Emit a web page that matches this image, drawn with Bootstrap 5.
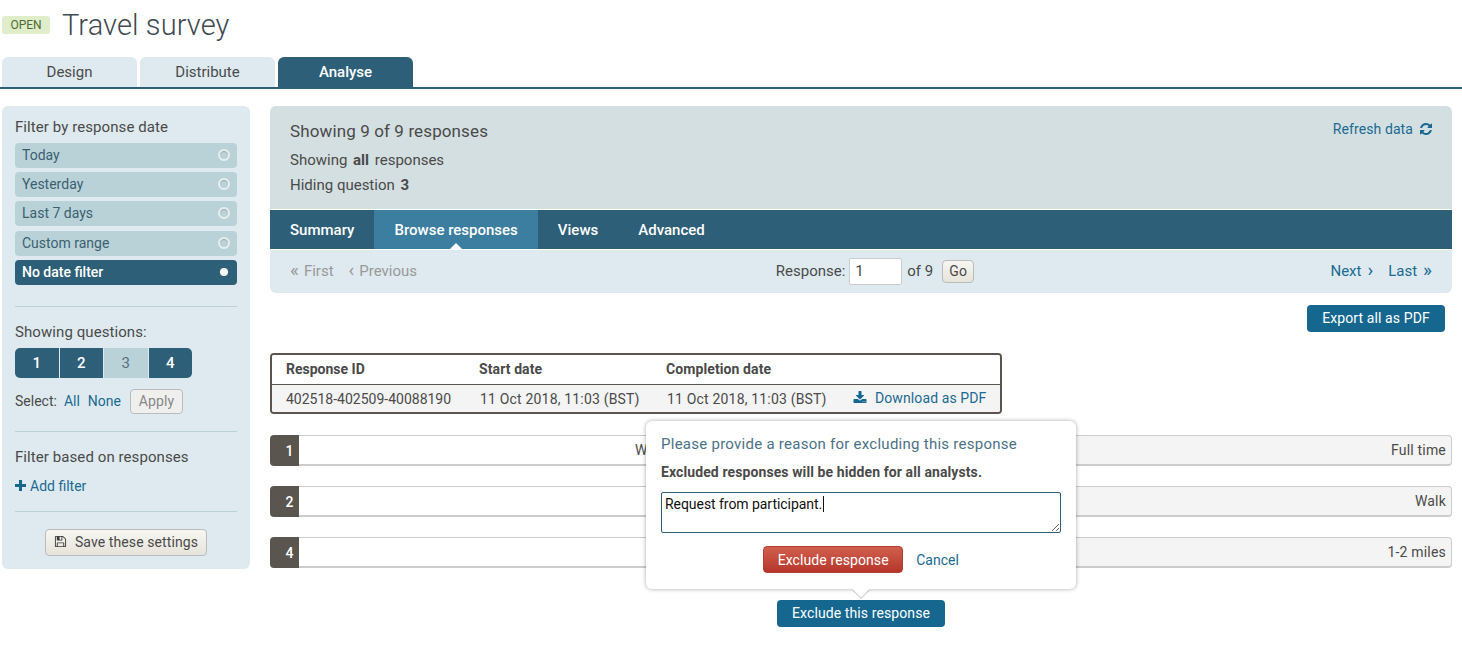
<!DOCTYPE html>
<html lang="en">
<head>
<meta charset="utf-8">
<title>Travel survey</title>
<link rel="stylesheet" href="https://cdn.jsdelivr.net/npm/bootstrap@5.3.0/dist/css/bootstrap.min.css">
<style>
body{font-family:Roboto,"Liberation Sans",sans-serif;font-size:15px;line-height:20px;color:#4a4a4a;background:#fff;overflow:hidden}
a{color:#1a6a91;text-decoration:none}
.page-wrap{padding:0 10px 0 2px}
.head-row{height:57px;display:flex;align-items:center;padding-bottom:7px}
.state-tag{background:#dfedcb;color:#4e6b34;font-size:12px;line-height:18px;height:18px;width:48px;text-align:center;border-radius:3px;margin-right:12px}
.survey-title{font-size:29px;font-weight:300;line-height:36px;margin:0;color:#3f4a52;letter-spacing:.1px}
.main-tabs{margin:0 -10px 0 -2px;padding-left:2px;border-bottom:2px solid #2d6078;height:32px;gap:3px}
.main-tabs a{display:block;width:135px;height:30px;line-height:30px;text-align:center;background:#deeaef;color:#4a4a4a;border-radius:6px 6px 0 0}
.main-tabs a.active{background:#2d6078;color:#fff;font-weight:500}
.layout{display:flex;gap:20px;margin-top:17px;align-items:flex-start}
.side-panel{width:248px;flex:none;height:463px;background:#deeaef;border-radius:6px;padding:11px 13px 0}
.main-col{flex:1;min-width:0}
.side-h{line-height:20px;margin-bottom:6px;letter-spacing:.08px}
.date-opt{display:flex;justify-content:space-between;align-items:center;height:25px;margin-bottom:4.2px;padding:0 7px 1px;border-radius:4px;background:#b9d2d8;color:#3c5f70;font-size:14px}
.date-opt.active{background:#2d6078;color:#fff;font-weight:500}
.radio-ring{width:12px;height:12px;border-radius:50%;border:2px solid #e8eeee;background:#b9d2d8;box-shadow:inset 0 1px 1px rgba(0,0,0,.2)}
.radio-dot{width:8px;height:8px;border-radius:50%;background:#fff;margin-right:2px}
.side-rule{border:0;border-top:1px solid #b9d2d8;opacity:1;margin:0}
.rule-a{margin-top:21px}
.rule-b{margin-top:17px}
.rule-c{margin-top:15px}
.side-h.gap-a{margin-top:15px}
.side-h.gap-b{margin-top:15px;margin-bottom:9px}
.q-btns{display:flex;gap:1px;width:177px;height:30px}
.q-btns span{flex:1;display:flex;align-items:center;justify-content:center;background:#2d6078;color:#fff;font-weight:500}
.q-btns span.off{background:#b9d2d8;color:#55717e;font-weight:400}
.q-btns span:first-child{border-radius:5px 0 0 5px}
.q-btns span:last-child{border-radius:0 5px 5px 0}
.sel-row{display:flex;align-items:center;height:25px;margin-top:11px;font-size:14px}
.sel-row a{margin-left:7px}
.sel-row a+a{margin-left:8px}
.add-link{font-size:14px}
.plain-btn{font-size:14px;line-height:20px;letter-spacing:.1px;border:1px solid #bbb;border-radius:4px;background:linear-gradient(#f7f6f2,#e6e3da);color:#4a4a4a;padding:2px 9px}
.plain-btn:disabled{background:#efefee;color:#888;opacity:1;border-color:#bbb}
.apply-btn{margin-left:9px;height:25px;width:53px;padding:0}
.save-wrap{display:flex;justify-content:center;margin-top:17px}
.save-btn{width:162px;height:27px;display:flex;align-items:center;justify-content:center;gap:8px;padding:0 0 1px}
.sum-head{background:#d4dfe1;height:103px;border-radius:6px 6px 0 0;padding:15px 19px 15px 20px;display:flex;justify-content:space-between}
.sum-title{font-size:17px;line-height:20px;margin-bottom:9px;letter-spacing:.12px}
.sum-line{line-height:20px;margin-bottom:5px}
.sum-line b{font-weight:700;margin:0 2px}
.refresh-link{display:flex;align-items:flex-start;gap:6px;height:16px;font-size:14px;letter-spacing:.1px;margin-top:-2px}
.refresh-link svg{margin-top:3px}
.sub-nav{background:#2d6078;height:39px;margin-top:1px}
.sub-nav a{display:block;height:39px;line-height:40px;padding:0 20px;color:#fff;font-weight:500;position:relative}
.sub-nav a.active{background:#3b7ea0}
.sub-nav a.active::after{content:"";position:absolute;left:50%;bottom:0;margin-left:-6px;border:6px solid transparent;border-top:0;border-bottom-color:#fff}
.pager-bar{background:#deeaef;height:43px;margin-top:1px;border-radius:0 0 6px 6px;display:grid;grid-template-columns:1fr auto 1fr;align-items:center;padding:0 20px 1px}
.pager-mid{margin-left:28px}
.pager-off{color:#999}
.pager-off>span,.pager-on>a{display:inline-flex;align-items:center;gap:5px}
.pager-on>a{gap:6px}
.pager-off>span+span,.pager-on>a+a{margin-left:15px}
.pager-on{text-align:right}
.chev{font-size:19px;line-height:18px;margin-top:-2px}
.resp-input{width:53px;height:27px;border:1px solid #ccc;border-radius:2px;padding:0 5px;margin:0 5px 0 4px;font:inherit;color:#4a4a4a;background:#fff}
.go-btn{height:23px;width:32px;padding:0;margin-left:9px;line-height:20px}
.export-line{display:flex;justify-content:flex-end;padding-right:7px;margin-top:12px}
.dark-btn{background:#15678f;color:#fff;border:0;border-radius:4px;height:27px;font-size:14px;letter-spacing:.1px;padding:0 0 1px}
.export-btn{width:138px}
.resp-table{width:732px;margin:21px 0;border:2px solid #5a564f;border-radius:4px;overflow:hidden}
.resp-table table{width:100%;margin:0;table-layout:fixed;font-size:14px}
.resp-table th,.resp-table td{padding:0;white-space:nowrap;border:0;letter-spacing:.1px;color:#4a4a4a;vertical-align:middle}
.resp-table th{height:29px;font-weight:700;background:#fff;border-bottom:1px solid #5a564f}
.resp-table td{height:28px;background:#f4f4f4;padding-top:1px;letter-spacing:.18px}
.resp-table td.cell-b,.resp-table td.cell-c{padding-left:1px}
.resp-table td a{color:#1a6a91;letter-spacing:.1px}
.resp-table .cell-a{padding-left:14px;width:207px;letter-spacing:0}
.cell-b{width:187px}
.cell-c{width:187px}
.dl-link{display:inline-flex;align-items:center;gap:8px}
.ans-row{display:flex;height:31px;margin-bottom:20px;font-size:14px;letter-spacing:.2px}
.ans-num{width:29px;flex:none;background:#5a564f;color:#fff;font-weight:500;display:flex;align-items:center;justify-content:center;padding-left:10px;border-radius:4px 0 0 4px}
.ans-q,.ans-a{flex:1;border-top:1px solid #ccc;border-bottom:2px solid #ccc;line-height:28px;white-space:nowrap;overflow:hidden}
.ans-q{padding-left:336px;flex:0 0 580px}
.ans-a{background:#f4f4f4;text-align:right;padding-right:5px;border-right:1px solid #ccc;border-radius:0 4px 4px 0}
.exclude-wrap{position:relative;width:168px;margin:32px auto 0}
.exclude-btn{width:168px}
.reason-pop{position:absolute;left:50%;bottom:38px;width:430px;height:168px;margin-left:-215px;background:#fff;border-radius:6px;box-shadow:0 0 4px rgba(0,0,0,.35);padding:13px 15px 0;font-size:14px}
.reason-pop::after{content:"";position:absolute;left:50%;bottom:-6px;width:12px;height:12px;margin-left:-6px;background:#fff;transform:rotate(45deg);box-shadow:1px 1px 1px rgba(0,0,0,.2)}
.pop-title{font-size:15px;line-height:20px;color:#4b7186;letter-spacing:.26px;margin-bottom:8px}
.pop-bold{font-weight:700;line-height:20px;margin-bottom:10px;letter-spacing:.1px}
.box-holder{position:relative}
.reason-box{display:block;width:400px;height:41px;border:1px solid #2d6078;border-radius:2px;padding:1px 3px;font:inherit;color:#111;outline:0;letter-spacing:-.05px}
.text-caret{position:absolute;left:162px;top:4px;width:1px;height:16px;background:#111}
.pop-actions{display:flex;justify-content:center;align-items:center;gap:13px;margin-top:13px}
.red-btn{width:140px;height:27px;padding:0;border:1px solid #b23b2e;border-radius:4px;background:linear-gradient(#d1604f,#b5362a);color:#fff;font-size:14px;letter-spacing:.1px}
</style>
</head>
<body>
<div class="page-wrap">
  <div class="head-row">
    <span class="state-tag">OPEN</span>
    <h1 class="survey-title">Travel survey</h1>
  </div>
  <nav class="nav main-tabs">
    <a class="nav-link p-0" href="#">Design</a>
    <a class="nav-link p-0" href="#">Distribute</a>
    <a class="nav-link p-0 active" href="#">Analyse</a>
  </nav>
  <div class="layout">
    <aside class="side-panel">
      <div class="side-h">Filter by response date</div>
      <div class="date-opt"><span>Today</span><span class="radio-ring"></span></div>
      <div class="date-opt"><span>Yesterday</span><span class="radio-ring"></span></div>
      <div class="date-opt"><span>Last 7 days</span><span class="radio-ring"></span></div>
      <div class="date-opt"><span>Custom range</span><span class="radio-ring"></span></div>
      <div class="date-opt active"><span>No date filter</span><span class="radio-dot"></span></div>
      <hr class="side-rule rule-a">
      <div class="side-h gap-a">Showing questions:</div>
      <div class="q-btns"><span>1</span><span>2</span><span class="off">3</span><span>4</span></div>
      <div class="sel-row">Select: <a href="#">All</a><a href="#">None</a><button class="plain-btn apply-btn" disabled>Apply</button></div>
      <hr class="side-rule rule-b">
      <div class="side-h gap-b">Filter based on responses</div>
      <a href="#" class="d-flex align-items-center gap-1 add-link">
        <svg width="11" height="11" viewBox="0 0 11 11"><path fill="#15678f" d="M4 0h3v4h4v3H7v4H4V7H0V4h4z"/></svg>Add filter</a>
      <hr class="side-rule rule-c">
      <div class="save-wrap"><button class="plain-btn save-btn">
        <svg width="13" height="13" viewBox="0 0 1792 1792"><path fill="#3c3c3c" d="M512 1536h768v-384h-768v384zm896 0h128v-896q0-14-10-38.500t-20-34.500l-281-281q-10-10-34-20t-39-10v416q0 40-28 68t-68 28h-576q-40 0-68-28t-28-68v-416h-128v1280h128v-416q0-40 28-68t68-28h832q40 0 68 28t28 68v416zm-384-928v-320q0-13-9.500-22.500t-22.500-9.500h-192q-13 0-22.500 9.500t-9.500 22.500v320q0 13 9.500 22.500t22.500 9.500h192q13 0 22.500-9.500t9.500-22.500zm640 32v928q0 40-28 68t-68 28h-1344q-40 0-68-28t-28-68v-1344q0-40 28-68t68-28h928q40 0 88 20t76 48l280 280q28 28 48 76t20 88z"/></svg>
        Save these settings</button></div>
    </aside>
    <main class="main-col">
      <div class="sum-head">
        <div>
          <div class="sum-title">Showing 9 of 9 responses</div>
          <div class="sum-line">Showing <b>all</b> responses</div>
          <div class="sum-line">Hiding question <b>3</b></div>
        </div>
        <a href="#" class="refresh-link">Refresh data
          <svg width="14" height="14" viewBox="0 0 1792 1792"><path fill="#15678f" d="M1639 1056q0 5-1 7-64 268-268 434.500t-478 166.500q-146 0-282.500-55t-243.500-157l-129 129q-19 19-45 19t-45-19-19-45v-448q0-26 19-45t45-19h448q26 0 45 19t19 45-19 45l-137 137q71 66 161 102t187 36q134 0 250-65t186-179q11-17 53-117 8-23 30-23h192q13 0 22.500 9.500t9.500 22.500zm25-800v448q0 26-19 45t-45 19h-448q-26 0-45-19t-19-45 19-45l138-138q-148-137-349-137-134 0-250 65t-186 179q-11 17-53 117-8 23-30 23h-199q-13 0-22.500-9.500t-9.500-22.500v-7q65-268 270-434.500t480-166.500q146 0 284 55.500t245 156.500l130-129q19-19 45-19t45 19 19 45z"/></svg></a>
      </div>
      <nav class="nav sub-nav">
        <a class="nav-link" href="#">Summary</a>
        <a class="nav-link active" href="#">Browse responses</a>
        <a class="nav-link" href="#">Views</a>
        <a class="nav-link" href="#">Advanced</a>
      </nav>
      <div class="pager-bar">
        <div class="pager-off"><span><span class="chev">«</span>First</span><span><span class="chev">‹</span>Previous</span></div>
        <div class="d-flex align-items-center pager-mid">Response: <input class="resp-input" value="1"> of 9 <button class="plain-btn go-btn">Go</button></div>
        <div class="pager-on"><a href="#">Next<span class="chev">›</span></a><a href="#">Last<span class="chev">»</span></a></div>
      </div>
      <div class="export-line"><button class="dark-btn export-btn">Export all as PDF</button></div>
      <div class="resp-table">
        <table class="table table-borderless">
          <thead><tr><th class="cell-a">Response ID</th><th class="cell-b">Start date</th><th class="cell-c">Completion date</th><th></th></tr></thead>
          <tbody><tr><td class="cell-a">402518-402509-40088190</td><td class="cell-b">11 Oct 2018, 11:03 (BST)</td><td class="cell-c">11 Oct 2018, 11:03 (BST)</td>
          <td><a href="#" class="dl-link"><svg width="14" height="14" viewBox="0 0 1792 1792"><path fill="#15678f" d="M1344 1344q0-26-19-45t-45-19-45 19-19 45 19 45 45 19 45-19 19-45zm256 0q0-26-19-45t-45-19-45 19-19 45 19 45 45 19 45-19 19-45zm128-224v320q0 40-28 68t-68 28h-1472q-40 0-68-28t-28-68v-320q0-40 28-68t68-28h465l135 136q58 56 136 56t136-56l136-136h464q40 0 68 28t28 68zm-325-569q17 41-14 70l-448 448q-18 19-45 19t-45-19l-448-448q-31-29-14-70 17-39 59-39h256v-448q0-26 19-45t45-19h256q26 0 45 19t19 45v448h256q42 0 59 39z"/></svg>Download as PDF</a></td></tr></tbody>
        </table>
      </div>
      <div class="ans-row"><div class="ans-num">1</div><div class="ans-q">W</div><div class="ans-a">Full time</div></div>
      <div class="ans-row"><div class="ans-num">2</div><div class="ans-q"></div><div class="ans-a">Walk</div></div>
      <div class="ans-row mb-0"><div class="ans-num">4</div><div class="ans-q"></div><div class="ans-a">1-2 miles</div></div>
      <div class="exclude-wrap">
        <div class="reason-pop">
          <div class="pop-title">Please provide a reason for excluding this response</div>
          <div class="pop-bold">Excluded responses will be hidden for all analysts.</div>
          <div class="box-holder">
            <textarea class="reason-box">Request from participant.</textarea>
            <span class="text-caret"></span>
          </div>
          <div class="pop-actions"><button class="red-btn">Exclude response</button><a href="#">Cancel</a></div>
        </div>
        <button class="dark-btn exclude-btn">Exclude this response</button>
      </div>
    </main>
  </div>
</div>
</body>
</html>
